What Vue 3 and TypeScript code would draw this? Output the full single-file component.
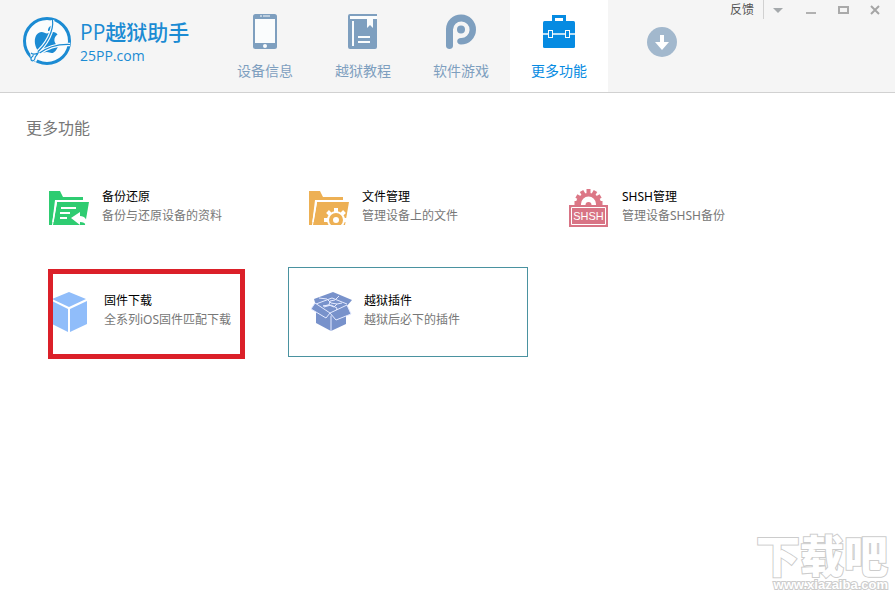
<script setup lang="ts">
import { ref } from 'vue'

type Icon = 'device' | 'book' | 'apps' | 'toolbox'
type FeatureIcon = 'backup' | 'files' | 'shsh' | 'firmware' | 'plugin'

interface Tab {
  label: string
  icon: Icon
}

interface Feature {
  title: string
  text: string
  icon: FeatureIcon
  kind?: 'marked' | 'hovered'
}

const tabs: Tab[] = [
  { label: '设备信息', icon: 'device' },
  { label: '越狱教程', icon: 'book' },
  { label: '软件游戏', icon: 'apps' },
  { label: '更多功能', icon: 'toolbox' },
]

const features: Feature[] = [
  { title: '备份还原', text: '备份与还原设备的资料', icon: 'backup' },
  { title: '文件管理', text: '管理设备上的文件', icon: 'files' },
  { title: 'SHSH管理', text: '管理设备SHSH备份', icon: 'shsh' },
  { title: '固件下载', text: '全系列iOS固件匹配下载', icon: 'firmware', kind: 'marked' },
  { title: '越狱插件', text: '越狱后必下的插件', icon: 'plugin', kind: 'hovered' },
]

const active = ref(3)
const teeth = [0, 45, 90, 135, 180, 225, 270, 315]
const halfTeeth = [-90, -60, -30, 0, 30, 60, 90]
</script>

<template>
  <div class="app">
    <header class="header">
      <a class="brand" href="#">
        <svg class="brand-mark" width="50" height="50" viewBox="0 0 50 50" aria-hidden="true">
          <circle cx="25" cy="25" r="22.5" fill="#fafcfd" stroke="#1b8bd3" stroke-width="3" />
          <path d="M25 17.500c2-1 4-1.800 6-1.500 2 .3 3.600 1.200 4.500 2.500-4.500 3-4 9 .8 11.200-1.300 4-4 7.300-6.500 7.300-2 0-3-1-5-1s-3 1-5 1c-3.500 0-7-6-7-11.500C12.800 19.500 16 16 19.500 16c2.200 0 4 1.500 5.500 1.500z" fill="#1b8bd3" />
          <path d="M26 15c-.2-3.500 2-5.500 5-6 .3 3.500-2 6-5 6z" fill="#1b8bd3" />
          <path d="M30.500 4C32 14 25 29 13 38M48 28.500C35 28 24 32 16 38" fill="none" stroke="#fafcfd" stroke-width="3.600" />
          <path d="M30.500 4C32 14 25 29 13 38M48 28.500C35 28 24 32 16 38" fill="none" stroke="#1b8bd3" stroke-width="1.200" />
          <path d="M8 36l7-1 4 3-5 8-5-3z" fill="#fafcfd" />
          <path d="M9 37c2 2 5 1 7 0-1 3-3 3-3 5 0 3-4 4-4 1s3-2 2-4" fill="none" stroke="#1b8bd3" stroke-width="1.200" />
        </svg>
        <span class="brand-text">
          <strong class="brand-name">PP越狱助手</strong>
          <span class="brand-site">25PP.com</span>
        </span>
      </a>

      <nav class="tabs">
        <button
          v-for="(tab, i) in tabs"
          :key="tab.label"
          type="button"
          class="tab"
          :class="{ active: i === active }"
          @click="active = i"
        >
          <svg class="tab-icon" width="36" height="36" viewBox="0 0 36 36" fill="currentColor" aria-hidden="true">
            <template v-if="tab.icon === 'device'">
              <rect x="6" y="0" width="24" height="35" rx="2.500" />
              <path class="paper" d="M8 5h20v24H8z" />
              <path d="M13 2h2M16 2h7" class="paper-line" stroke-width="1" />
              <circle class="paper" cx="18" cy="32" r="2" />
            </template>
            <template v-else-if="tab.icon === 'book'">
              <path d="M5 0h27v2H7v3h25v28q0 2-2 2H5q-2 0-2-2V2q0-2 2-2z" />
              <path class="paper" d="M5 2h27v3H5zM7 7h2v25H7zM22 4h6v10l-3-3-3 3zM13 22h12v2H13zM13 27h12v2H13z" />
            </template>
            <template v-else-if="tab.icon === 'apps'">
              <path d="M3 32V15a15 15 0 1 1 15 15.500c-2.500 0-3.800-1.300-3.800-3.200s1.300-3.300 3.800-3.300a8.300 8.300 0 1 0-8-8.500V32c0 4-7 4-7 0z" />
              <circle cx="18" cy="15.500" r="4" />
            </template>
            <template v-else>
              <path d="M11 8V1h14v7h-3V4h-8v4z" />
              <rect x="2" y="7" width="32" height="27" rx="1.500" />
              <path class="paper-line" d="M2 20h32" stroke-width="1.500" />
              <path class="paper" d="M7 16h5v8H7zM24 16h5v8h-5z" />
              <path d="M8 17h3v6H8zM25 17h3v6h-3z" />
            </template>
          </svg>
          <span>{{ tab.label }}</span>
        </button>
      </nav>

      <button type="button" class="downloads" aria-label="下载">
        <svg width="30" height="30" viewBox="0 0 30 30" aria-hidden="true">
          <circle cx="15" cy="15" r="15" fill="#a2b8cd" />
          <path d="M13 8h4v7h5l-7 8-7-8h5z" fill="#fff" />
        </svg>
      </button>

      <div class="window-bar">
        <button type="button" class="feedback">反馈</button>
        <button type="button" class="control menu" aria-label="菜单">
          <svg width="12" height="12" viewBox="0 0 12 12"><path d="M1 4h10L6 9z" fill="#a5a9ac" /></svg>
        </button>
        <button type="button" class="control" aria-label="最小化">
          <svg width="12" height="12" viewBox="0 0 12 12"><path d="M1 8h10v2H1z" fill="#b1b1b1" /></svg>
        </button>
        <button type="button" class="control" aria-label="最大化">
          <svg width="12" height="12" viewBox="0 0 12 12"><path d="M2 3h9v6H2z" fill="none" stroke="#aaa" stroke-width="2" /></svg>
        </button>
        <button type="button" class="control" aria-label="关闭">
          <svg width="12" height="12" viewBox="0 0 12 12"><path d="M2 2l8 8M10 2l-8 8" stroke="#a5a5a5" stroke-width="2" /></svg>
        </button>
      </div>
    </header>

    <main class="content">
      <h1 class="title">更多功能</h1>
      <div class="grid">
        <a v-for="item in features" :key="item.title" class="card" :class="item.kind" href="#">
          <svg v-if="item.icon === 'backup'" class="card-icon" viewBox="0 0 42 42" aria-hidden="true">
            <path d="M0 4h11l3 6h20v3H6L3 38H0z" fill="#2ecc71" />
            <path d="M8 15h32l-4 23H4z" fill="#2ecc71" />
            <path d="M7.500 14L4 35" stroke="#fff" stroke-width="1.500" />
            <path d="M12 20h15v2H12zM11 25h10v2H11zM11 30h7v2h-7z" fill="#fff" />
            <path d="M22 31l9-6v4c5 0 8 4 6 9-1-2-3-3-6-3v3z" fill="#fff" />
          </svg>
          <svg v-else-if="item.icon === 'files'" class="card-icon" viewBox="0 0 42 42" aria-hidden="true">
            <path d="M0 4h11l3 6h20v3H6L3 38H0z" fill="#edb054" />
            <path d="M8 15h32l-4 23H4z" fill="#edb054" />
            <path d="M7.500 14L4 35" stroke="#fff" stroke-width="1.500" />
            <g fill="#fff" transform="translate(27 33)">
              <circle r="9" />
              <rect v-for="a in teeth" :key="a" x="-2" y="-12" width="4" height="5" :transform="`rotate(${a})`" />
            </g>
            <circle cx="27" cy="33" r="5" fill="none" stroke="#edb054" stroke-width="4" />
            <path d="M15 38h23v4H15z" fill="#fff" />
          </svg>
          <svg v-else-if="item.icon === 'shsh'" class="card-icon" viewBox="0 0 42 42" aria-hidden="true">
            <g fill="#dc7786" transform="translate(19.500 16)">
              <path d="M-13 2a13 12 0 0 1 26 0z" />
              <rect v-for="a in halfTeeth" :key="a" x="-2" y="-14" width="4" height="5" :transform="`rotate(${a})`" />
            </g>
            <path d="M12 17a7.500 7.500 0 0 1 15 0v1H12z" fill="#fff" />
            <path d="M16.500 18a3 3 0 0 1 6 0z" fill="#dc7786" />
            <path d="M0 18h39v22H0z" fill="#d87485" />
            <path d="M2.500 20.500h34v17h-34z" fill="none" stroke="#fff" />
            <text x="19.500" y="33" class="stamp">SHSH</text>
          </svg>
          <svg v-else-if="item.icon === 'firmware'" class="card-icon" viewBox="0 0 42 42" aria-hidden="true">
            <path d="M1 8l17-7 17 7-17 8zM1 10l16 8v23L1 33zM19 18l17-8v23l-17 8z" fill="#90bdfa" />
          </svg>
          <svg v-else class="card-icon" viewBox="0 0 42 42" aria-hidden="true">
            <g fill="#7892cb" stroke="#e4eaff" stroke-linejoin="round">
              <path d="M5 18l14 5 16-8v18l-15 7-15-8z" stroke="none" />
              <path d="M20 24v16" />
              <path d="M3 8l19-7 19 8-6 7-16 9L5 15z" stroke="none" />
              <path d="M5 13L21 7l15 6M8 7l8 1 4 4 6 1M28 5l-4 4-5 1-1 4-6 1M12 15l6-1 5 2 3-3 5-1" fill="none" />
              <path d="M13 16l7-2 6 3-1 3" fill="none" />
              <path d="M4 12l15 10-4 5-15-9zM36 14l4 9-15 6-6-7z" />
            </g>
          </svg>
          <span class="card-text">
            <span class="card-title">{{ item.title }}</span>
            <span class="card-desc">{{ item.text }}</span>
          </span>
        </a>
      </div>
    </main>

    <div class="watermark">
      <span class="mark-name">下载吧</span>
      <span class="mark-site">www.xiazaiba.com</span>
    </div>
  </div>
</template>

<style>
body {
  margin: 0;
  background: #fff;
}
</style>

<style scoped>
.app {
  position: relative;
  box-sizing: border-box;
  min-height: 100vh;
  font-family: "Noto Sans", "Noto Sans CJK SC", sans-serif;
  overflow: hidden;
}
button {
  padding: 0;
  border: 0;
  background: none;
  font: inherit;
  cursor: pointer;
}
a {
  color: inherit;
  text-decoration: none;
}
svg {
  display: block;
}
.header {
  display: flex;
  align-items: stretch;
  height: 92px;
  border-bottom: 1px solid #d1d1d1;
  background: #f5f5f5;
}
.brand {
  display: flex;
  align-items: flex-start;
  box-sizing: border-box;
  flex: 0 0 216px;
  gap: 8px;
  padding: 16px 0 0 22px;
  color: #1b8bd3;
}
.brand-mark {
  flex: none;
}
.brand-text {
  display: flex;
  flex-direction: column;
  padding-top: 2px;
  white-space: nowrap;
}
.brand-name {
  font: 500 21px/28px "Open Sans", "Noto Sans CJK SC", sans-serif;
}
.brand-site {
  font: 14px/20px "Open Sans", sans-serif;
}
.tabs {
  display: flex;
}
.tab {
  display: flex;
  flex-direction: column;
  align-items: center;
  gap: 11px;
  width: 98px;
  padding-top: 14px;
  color: #7e9fbf;
  font-size: 14px;
  line-height: 20px;
}
.tab.active {
  background: #fff;
  color: #068be2;
}
.paper {
  fill: #fafcfd;
}
.paper-line {
  fill: none;
  stroke: #fafcfd;
}
.downloads {
  align-self: flex-start;
  margin: 27px 0 0 39px;
}
.window-bar {
  display: flex;
  align-items: center;
  align-self: flex-start;
  height: 19px;
  margin-left: auto;
  padding-right: 4px;
}
.feedback {
  padding-right: 9px;
  color: #555;
  font-size: 12px;
  line-height: 19px;
}
.control {
  display: flex;
  align-items: center;
  justify-content: center;
  width: 32px;
  height: 19px;
}
.control.menu {
  box-sizing: border-box;
  border-left: 1px solid #d1d1d1;
  padding-right: 4px;
}
.content {
  padding: 23px 28px 40px;
}
.title {
  margin: 0 0 23px -2px;
  color: #777;
  font-size: 16px;
  font-weight: 400;
  line-height: 24px;
}
.grid {
  display: grid;
  grid-template-columns: repeat(auto-fill, 240px);
  gap: 14px 20px;
}
.card {
  position: relative;
  display: flex;
  align-items: center;
  box-sizing: border-box;
  gap: 11px;
  height: 90px;
  padding-left: 20px;
  border: 1px solid transparent;
}
.card.marked,
.card.hovered {
  padding-left: 22px;
}
.card.hovered {
  border-color: #4a92a0;
}
.card.marked::after {
  content: "";
  position: absolute;
  top: 1px;
  left: 19px;
  box-sizing: border-box;
  width: 197px;
  height: 90px;
  border: 5px solid #db2029;
}
.card-icon {
  flex: none;
  width: 42px;
  height: 42px;
}
.card-text {
  display: flex;
  flex-direction: column;
  padding-bottom: 4px;
  font-size: 12px;
  line-height: 19px;
  white-space: nowrap;
}
.card-title {
  color: #000;
}
.card-desc {
  color: #777;
}
.stamp {
  fill: #fff;
  font: 11px "Liberation Sans", sans-serif;
  text-anchor: middle;
}
.watermark {
  position: absolute;
  right: 7px;
  bottom: 2px;
  display: flex;
  flex-direction: column;
  align-items: flex-end;
  color: #fff;
  paint-order: stroke fill;
  -webkit-text-stroke: 2px #ccc;
}
.mark-name {
  font: 900 44px/48px "Noto Sans CJK SC", sans-serif;
}
.mark-site {
  font: 700 13px/14px "Liberation Sans", sans-serif;
}
</style>
